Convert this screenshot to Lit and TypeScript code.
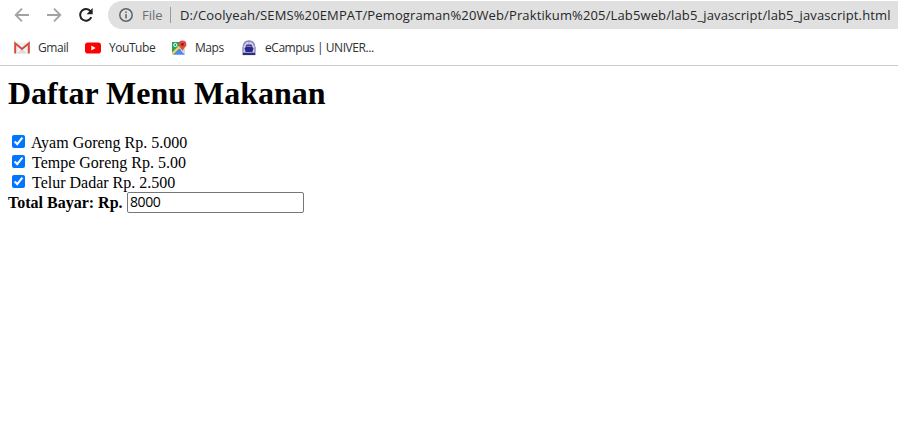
import { LitElement, html, css, svg } from "lit";
import { customElement, state } from "lit/decorators.js";

interface MenuItem {
  label: string;
  cls: string;
  checked: boolean;
}

const gmailIcon = svg`
  <path d="M1 2.5h14v11H1z" fill="#f1f1f1"/>
  <path d="M3 13.5L8 9l5 4.500z" fill="#dcdcdc"/>
  <path d="M1.200 13.500V3.300L8 9l6.800-5.700v10.200" fill="none" stroke="#d9483b" stroke-width="2"/>`;

const youtubeIcon = svg`
  <rect x="0" y="2.500" width="16" height="11" rx="2.800" fill="#f00"/>
  <path d="M6.300 5.500v5l4.400-2.500z" fill="#fff"/>`;

const mapsIcon = svg`
  <path d="M1 2h9v12H1z" fill="#1ea362"/>
  <path d="M8.500 8.500L11 6l3 3v5.500z" fill="#d5d5d5"/>
  <path d="M1 12.500L9.500 4l2 2L2.500 14.800H1z" fill="#fbd14b"/>
  <path d="M2 14.700L8 8.700l6 6z" fill="#4a89f3"/>
  <circle cx="4.300" cy="5" r="1.600" fill="none" stroke="#fff"/>
  <path d="M11.500 .5a3.900 3.900 0 0 0-3.900 3.900c0 2.600 2.900 3.500 3.900 6.600 1-3.100 3.900-4 3.900-6.600A3.900 3.900 0 0 0 11.500 .5z" fill="#e04a3f"/>
  <circle cx="11.500" cy="4.400" r="1.300" fill="#7b231e"/>`;

const campusIcon = svg`
  <path d="M8 .2l5 2.300 1.800 4.500-.8 8H2L1.200 7 3 2.500z" fill="#d3d4ea"/>
  <path d="M2.400 6.500Q3 1 8 1t5.600 5.500" fill="none" stroke="#8082bd" stroke-width="1.300"/>
  <path d="M2 7v5M14 7v5" stroke="#9093c6" stroke-width="1.400"/>
  <path d="M7.300 2.200h1.400v1.400H7.300z" fill="#d88463"/>
  <path d="M5.500 4.400h5l1.200 3 .9.800-1.200 3.800H4.600L3.400 8.200l.9-.8z" fill="#29298a"/>
  <path d="M5.500 6.300h5" stroke="#b4b5d8" stroke-width=".8"/>
  <path d="M1.600 12.500h12.800v2.600H1.600z" fill="#2e2f82"/>
  <path d="M3 12.400h10" stroke="#a9aad0" stroke-width=".6"/>`;

@customElement("app-root")
export class AppRoot extends LitElement {
  @state() private items: MenuItem[] = [
    { label: "Ayam Goreng Rp. 5.000", cls: "first", checked: true },
    { label: "Tempe Goreng Rp. 5.00", cls: "second", checked: true },
    { label: "Telur Dadar Rp. 2.500", cls: "third", checked: true },
  ];

  private bookmarks = [
    { name: "Gmail", cls: "gmail", icon: gmailIcon },
    { name: "YouTube", cls: "youtube", icon: youtubeIcon },
    { name: "Maps", cls: "maps", icon: mapsIcon },
    { name: "eCampus | UNIVER...", cls: "campus", icon: campusIcon },
  ];

  static styles = css`
    :host {
      display: block;
      height: 423px;
      background: #fff;
      overflow: hidden;
    }
    svg { display: block; flex: none; }
    .toolbar {
      display: flex;
      height: 30px;
      padding-left: 14px;
      font-family: "Open Sans", sans-serif;
    }
    .nav { display: flex; gap: 16px; align-items: center; width: 94px; flex: none; }
    .address {
      display: flex;
      align-items: center;
      flex: 1;
      height: 28px;
      margin-top: 1px;
      padding-left: 10px;
      border-radius: 14px 0 0 14px;
      background: #e0e0e0;
      font-size: 13px;
      white-space: nowrap;
    }
    .scheme { margin-left: 8px; width: 28px; color: #6b6e72; }
    .rule { width: 1px; height: 16px; background: #97999c; }
    .url { margin-left: 9px; color: #25272a; letter-spacing: 0.128px; }
    .bookmarks {
      display: flex;
      align-items: center;
      height: 35px;
      padding-left: 14px;
      border-bottom: 1px solid #c9cacb;
      font: 12px "Open Sans", sans-serif;
      letter-spacing: -0.45px;
      color: #303236;
      white-space: nowrap;
    }
    .bookmark { display: flex; align-items: center; gap: 8px; }
    .gmail { width: 71px; }
    .youtube { width: 86px; }
    .maps { width: 70px; }
    .page {
      padding: 9px 8px 0;
      font: 16px "Liberation Serif", "Times New Roman", serif;
      color: #000;
    }
    h1 { margin: 0 0 21px; font-size: 32px; line-height: 36px; }
    .item { display: flex; align-items: center; height: 20px; }
    .item input { width: 13px; height: 13px; margin: 0 6px 1px 4px; accent-color: #0075ff; }
    .item span { padding-top: 2px; }
    .item.second input, .item.third input { margin-right: 7px; }
    .total { display: flex; align-items: center; height: 21px; }
    .total b { width: 119px; }
    .total input {
      box-sizing: border-box;
      width: 177px;
      height: 21px;
      margin: 0;
      padding: 0 2px 2px;
      border: 1px solid #767676;
      border-radius: 2px;
      background: #fff;
      color: #000;
      font: 14px "Open Sans", sans-serif;
      letter-spacing: -0.4px;
    }
  `;

  private toggle(index: number) {
    this.items = this.items.map((item, i) =>
      i === index ? { ...item, checked: !item.checked } : item
    );
  }

  render() {
    return html`
      <div class="toolbar">
        <div class="nav">
          <svg width="16" height="16" viewBox="0 0 16 16" fill="none" stroke="#a0a2a5" stroke-width="1.800">
            <path d="M15 8H2M8 1.700L1.700 8 8 14.300"/>
          </svg>
          <svg width="16" height="16" viewBox="0 0 16 16" fill="none" stroke="#a0a2a5" stroke-width="1.800">
            <path d="M1 8h13M8 1.700L14.300 8 8 14.300"/>
          </svg>
          <svg width="16" height="16" viewBox="0 0 16 16">
            <path d="M13.300 10.200A5.800 5.800 0 1 1 12.600 4.400" fill="none" stroke="#202124" stroke-width="2"/>
            <path d="M14.700 1v6.200H8.500z" fill="#202124"/>
          </svg>
        </div>
        <div class="address">
          <svg width="16" height="16" viewBox="0 0 16 16">
            <circle cx="8" cy="8" r="6.200" fill="none" stroke="#5f6368" stroke-width="1.500"/>
            <path d="M8 7v4.500M8 4.500V6" stroke="#5f6368" stroke-width="1.500"/>
          </svg>
          <span class="scheme">File</span>
          <span class="rule"></span>
          <span class="url">D:/Coolyeah/SEMS%20EMPAT/Pemograman%20Web/Praktikum%205/Lab5web/lab5_javascript/lab5_javascript.html</span>
        </div>
      </div>
      <div class="bookmarks">
        ${this.bookmarks.map(
          (b) => html`<div class="bookmark ${b.cls}">
            <svg width="16" height="16" viewBox="0 0 16 16">${b.icon}</svg>
            <span>${b.name}</span>
          </div>`
        )}
      </div>
      <main class="page">
        <h1>Daftar Menu Makanan</h1>
        ${this.items.map(
          (item, i) => html`<label class="item ${item.cls}">
            <input type="checkbox" .checked=${item.checked} @change=${() => this.toggle(i)} />
            <span>${item.label}</span>
          </label>`
        )}
        <div class="total"><b>Total Bayar: Rp.</b><input type="text" .value=${"8000"} /></div>
      </main>
    `;
  }
}
